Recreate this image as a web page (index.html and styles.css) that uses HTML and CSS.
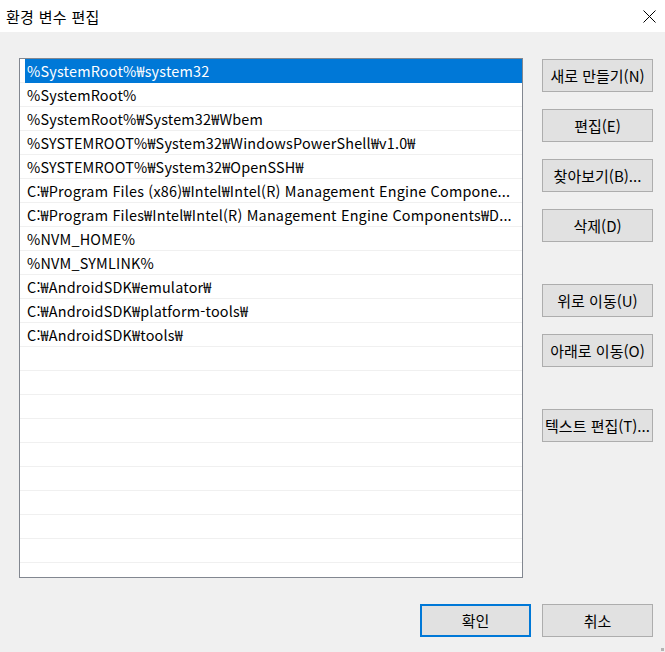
FILE: index.html
```html
<!DOCTYPE html>
<html lang="ko">

<head>
    <meta charset="UTF-8">
    <title>환경 변수 편집</title>
    <link rel="stylesheet" href="styles.css">
</head>

<body>

    <div class="window">

        <div class="titlebar">
            <span class="title">환경 변수 편집</span>
            <svg class="close" width="13" height="13" viewBox="0 0 13 13">
                <path d="M0.5 0.5 L12.5 12.5 M12.5 0.5 L0.5 12.5" stroke="#000" stroke-width="1" fill="none"/>
            </svg>
        </div>

        <div class="body">
            <div class="main">
                <div class="listbox">
                    <div class="row selected"><span class="cell">%SystemRoot%₩system32</span></div>
                    <div class="row"><span class="cell">%SystemRoot%</span></div>
                    <div class="row"><span class="cell">%SystemRoot%₩System32₩Wbem</span></div>
                    <div class="row"><span class="cell">%SYSTEMROOT%₩System32₩WindowsPowerShell₩v1.0₩</span></div>
                    <div class="row"><span class="cell">%SYSTEMROOT%₩System32₩OpenSSH₩</span></div>
                    <div class="row"><span class="cell">C:₩Program Files (x86)₩Intel₩Intel(R) Management Engine Compone...</span></div>
                    <div class="row"><span class="cell">C:₩Program Files₩Intel₩Intel(R) Management Engine Components₩D...</span></div>
                    <div class="row"><span class="cell">%NVM_HOME%</span></div>
                    <div class="row"><span class="cell">%NVM_SYMLINK%</span></div>
                    <div class="row"><span class="cell">C:₩AndroidSDK₩emulator₩</span></div>
                    <div class="row"><span class="cell">C:₩AndroidSDK₩platform-tools₩</span></div>
                    <div class="row"><span class="cell">C:₩AndroidSDK₩tools₩</span></div>
                    <div class="row"></div>
                    <div class="row"></div>
                    <div class="row"></div>
                    <div class="row"></div>
                    <div class="row"></div>
                    <div class="row"></div>
                    <div class="row"></div>
                    <div class="row"></div>
                    <div class="row"></div>
                </div>

                <div class="side-buttons">
                    <button class="btn">새로 만들기(N)</button>
                    <button class="btn">편집(E)</button>
                    <button class="btn">찾아보기(B)...</button>
                    <button class="btn">삭제(D)</button>
                    <button class="btn group">위로 이동(U)</button>
                    <button class="btn">아래로 이동(O)</button>
                    <button class="btn group">텍스트 편집(T)...</button>
                </div>
            </div>

            <div class="footer">
                <button class="btn default">확인</button>
                <button class="btn">취소</button>
            </div>

            <div class="grip"></div>
        </div>

    </div>

</body>

</html>
```

FILE: styles.css
```css
html,
body {
    margin: 0;
    padding: 0;
    height: 100%;
    overflow: hidden;
    font-family: "Noto Sans CJK KR", "Noto Sans", sans-serif;
    font-size: 15px;
    color: #000;
}

.window {
    display: flex;
    flex-direction: column;
    width: 665px;
    height: 652px;
}

.titlebar {
    display: flex;
    align-items: center;
    justify-content: space-between;
    height: 32px;
    padding: 0 9px 0 6px;
    background: #fff;
    box-sizing: border-box;
}

.title {
    font-size: 15px;
    letter-spacing: 0.3px;
}

.close {
    display: block;
}

.body {
    position: relative;
    flex: 1;
    background: #f0f0f0;
    padding: 26px 12px 0 19px;
}

.main {
    display: flex;
    gap: 19px;
}

.listbox {
    width: 504px;
    height: 520px;
    box-sizing: border-box;
    border: 1px solid #828790;
    background: #fff;
    overflow: hidden;
}

.row {
    display: flex;
    height: 24px;
    box-sizing: border-box;
    padding-left: 5px;
    border-bottom: 1px solid #f0f0f0;
}

.cell {
    flex: 1;
    min-width: 0;
    height: 23px;
    line-height: 23px;
    padding: 0 4px 0 2px;
    font-size: 14.4px;
    letter-spacing: 0.2px;
    white-space: nowrap;
    overflow: hidden;
}

.row.selected .cell {
    height: 24px;
    background: #0078d7;
    color: #fff;
}

.side-buttons {
    display: flex;
    flex-direction: column;
    gap: 17px;
    padding-top: 1px;
}

.btn {
    width: 111px;
    height: 33px;
    padding: 0;
    box-sizing: border-box;
    border: 1px solid #adadad;
    background: #e1e1e1;
    font-family: inherit;
    font-size: 15px;
    color: #000;
    white-space: nowrap;
}

.btn.group {
    margin-top: 25px;
}

.footer {
    display: flex;
    justify-content: flex-end;
    gap: 11px;
    margin-top: 26px;
}

.btn.default {
    border: 2px solid #0078d7;
}

.grip {
    position: absolute;
    right: 1px;
    bottom: 1px;
    width: 3px;
    height: 3px;
    background: #b4b4b4;
}
```
